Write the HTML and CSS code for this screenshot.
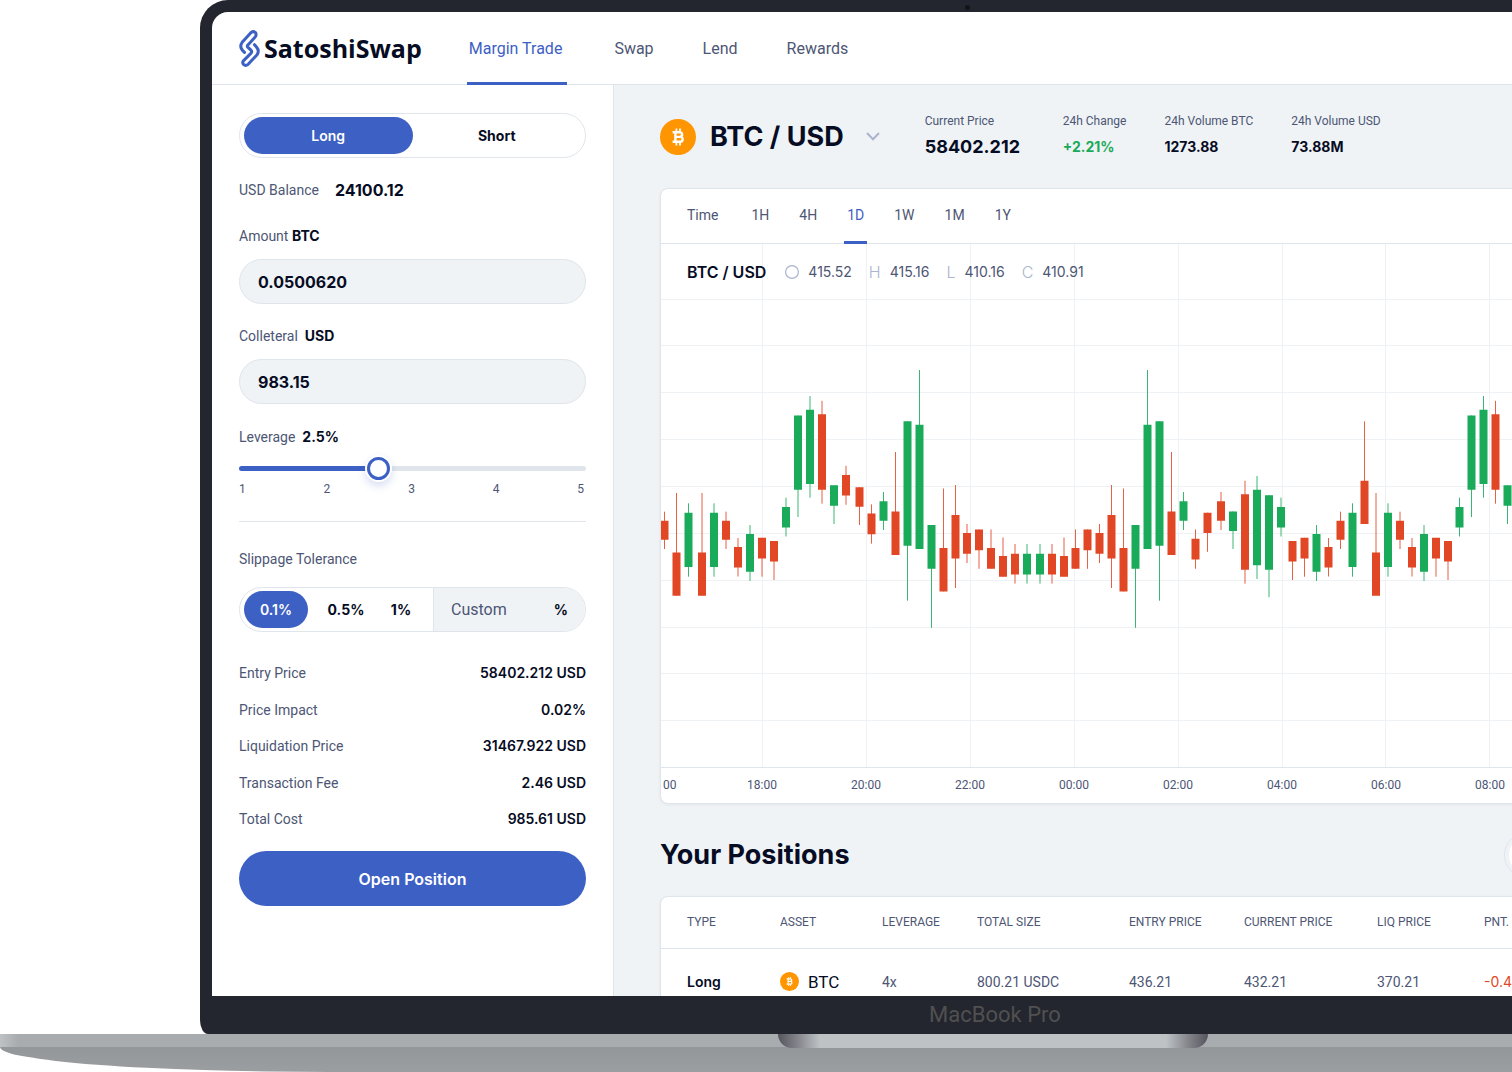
FILE: index.html
```html
<!DOCTYPE html>
<html lang="en">
<head>
<meta charset="utf-8">
<meta name="viewport" content="width=device-width, initial-scale=1">
<title>SatoshiSwap – Margin Trade</title>
<link rel="stylesheet" href="styles.css">
</head>
<body>
<svg class="defs" aria-hidden="true">
  <symbol id="btc" viewBox="0 0 36 36">
    <circle cx="18" cy="18" r="18" fill="#ff9500"/>
    <g fill="none" stroke="#fff" stroke-width="2.4">
      <path d="M12.6 13.2h7.2a2.3 2.3 0 0 1 0 4.7h-3.6M12.6 22.8h7.6a2.45 2.45 0 0 0 0-4.9h-4M15.4 13.2v9.6"/>
      <path stroke-width="1.8" d="M16.4 9.6v3M20 9.6v3M16.4 23.6v3M20 23.6v3"/>
    </g>
  </symbol>
</svg>
<div class="page">
  <div class="lid">
    <div class="lid-top"><span class="camera"></span></div>
    <div class="screen">
      <header class="topbar">
        <a class="logo" href="#">
          <svg width="21" height="37" viewBox="147 90 62 111" aria-hidden="true"><path fill="none" stroke="#3d60c4" stroke-width="9" stroke-linecap="round" stroke-linejoin="round" d="M163 157L157 151Q147 139 156 127L182 98Q190 92 196 98Q200 104 195 111L174 134Q169 139 174 143L182 150Q187 155 182 160L161 181Q155 187 160 193Q166 199 174 193L200 165Q209 153 199 141L193 134"/></svg>
          <span>SatoshiSwap</span>
        </a>
        <nav class="nav">
          <a class="active" href="#">Margin Trade</a>
          <a href="#">Swap</a>
          <a href="#">Lend</a>
          <a href="#">Rewards</a>
        </nav>
      </header>
      <div class="body">
        <aside class="panel">
          <div class="segmented">
            <button class="selected" type="button">Long</button>
            <button type="button">Short</button>
          </div>
          <p class="balance">USD Balance <strong>24100.12</strong></p>
          <div class="field">
            <label for="amount">Amount <b>BTC</b></label>
            <input id="amount" type="text" value="0.0500620">
          </div>
          <div class="field">
            <label for="collateral">Colleteral&nbsp; <b>USD</b></label>
            <input id="collateral" type="text" value="983.15">
          </div>
          <div class="leverage">
            <label for="leverage">Leverage&nbsp; <b>2.5%</b></label>
            <input id="leverage" type="range" min="1" max="5" step="0.01" value="2.58">
            <div class="ticks"><span>1</span><span>2</span><span>3</span><span>4</span><span>5</span></div>
          </div>
          <div class="slippage">
            <label for="custom">Slippage Tolerance</label>
            <div class="segmented options">
              <button class="selected" type="button">0.1%</button>
              <button type="button">0.5%</button>
              <button type="button">1%</button>
              <div class="custom"><input id="custom" type="text" placeholder="Custom"><b>%</b></div>
            </div>
          </div>
          <dl class="summary">
            <div><dt>Entry Price</dt><dd>58402.212 USD</dd></div>
            <div><dt>Price Impact</dt><dd>0.02%</dd></div>
            <div><dt>Liquidation Price</dt><dd>31467.922 USD</dd></div>
            <div><dt>Transaction Fee</dt><dd>2.46 USD</dd></div>
            <div><dt>Total Cost</dt><dd>985.61 USD</dd></div>
          </dl>
          <button class="submit" type="button">Open Position</button>
        </aside>
        <main class="main">
          <div class="market">
            <button class="pair" type="button">
              <svg width="36" height="36" aria-hidden="true"><use href="#btc"/></svg>
              <span>BTC / USD</span>
              <svg width="14" height="9" viewBox="0 0 14 9" aria-hidden="true"><path d="M1 1l6 6.2L13 1" fill="none" stroke="#abb4cd" stroke-width="2"/></svg>
            </button>
            <dl class="stats">
              <div><dt>Current Price</dt><dd class="price">58402.212</dd></div>
              <div><dt>24h Change</dt><dd class="up">+2.21%</dd></div>
              <div><dt>24h Volume BTC</dt><dd>1273.88</dd></div>
              <div><dt>24h Volume USD</dt><dd>73.88M</dd></div>
            </dl>
          </div>
          <section class="card">
            <div class="ranges">
              <span>Time</span>
              <button type="button">1H</button>
              <button type="button">4H</button>
              <button class="active" type="button">1D</button>
              <button type="button">1W</button>
              <button type="button">1M</button>
              <button type="button">1Y</button>
            </div>
            <div class="chart">
              <svg id="candles" width="1066" height="523" aria-label="BTC / USD price"></svg>
              <div class="ohlc">
                <strong>BTC / USD</strong>
                <span><svg width="14" height="20" viewBox="0 0 14 20" role="img" aria-label="O"><circle cx="7" cy="10" r="6.4" fill="none" stroke="#abb4cd" stroke-width="1.2"/></svg>415.52</span>
                <span><i>H</i>415.16</span>
                <span><i>L</i>410.16</span>
                <span><i>C</i>410.91</span>
              </div>
            </div>
            <div class="axis"><span>00</span><span>18:00</span><span>20:00</span><span>22:00</span><span>00:00</span><span>02:00</span><span>04:00</span><span>06:00</span><span>08:00</span></div>
          </section>
          <div class="heading">
            <h2>Your Positions</h2>
            <div class="segmented"><button class="light" type="button" aria-label="Open"></button><button type="button" aria-label="Closed"></button></div>
          </div>
          <section class="card">
            <table class="positions">
              <colgroup><col class="c-type"><col class="c-asset"><col class="c-lev"><col class="c-size"><col class="c-entry"><col class="c-current"><col class="c-liq"><col></colgroup>
              <thead><tr><th>TYPE</th><th>ASSET</th><th>LEVERAGE</th><th>TOTAL SIZE</th><th>ENTRY PRICE</th><th>CURRENT PRICE</th><th>LIQ PRICE</th><th>PNT.</th></tr></thead>
              <tbody><tr><td><b>Long</b></td><td><span class="asset"><svg width="19" height="19" aria-hidden="true"><use href="#btc"/></svg>BTC</span></td><td>4x</td><td>800.21 USDC</td><td>436.21</td><td>432.21</td><td>370.21</td><td class="down">-0.4</td></tr></tbody>
            </table>
          </section>
        </main>
      </div>
    </div>
    <div class="chin">MacBook Pro</div>
  </div>
  <div class="base">
    <div class="deck"><span class="notch"></span></div>
    <div class="underside"></div>
  </div>
</div>
<script src="chart.js"></script>
</body>
</html>
```
FILE: chart.js
```js
// Candle shapes: direction, high, body top, body bottom, low (chart pixels from y = 244).
const shapes = {
  a: ['r', 511.7, 520.7, 539.7, 549],
  b: ['r', 493, 552.5, 595.7, 595.7],
  c: ['g', 503.3, 512.7, 567, 576.7],
  d: ['r', 538, 547, 567.5, 576.5],
  e: ['g', 525, 534, 571.7, 581],
  f: ['r', 537.8, 537.8, 558.4, 576.7],
  g: ['r', 541, 541, 561.6, 580],
  h: ['g', 497.7, 507, 527.4, 536.5],
  i: ['g', 415.5, 415.5, 489.7, 517],
  j: ['g', 396, 409.8, 484, 497.7],
  k: ['r', 400.8, 414.3, 489.7, 503.7],
  l: ['g', 485.3, 485.3, 505.7, 524],
  m: ['r', 465.8, 475, 495.5, 504.8],
  n: ['r', 487.3, 487.3, 506.8, 525],
  o: ['r', 504.4, 513.6, 534.2, 543.6],
  p: ['g', 492, 501.2, 520.8, 530],
  q: ['r', 452, 511.4, 555, 555],
  s: ['g', 421.3, 421.3, 545.8, 600.7],
  t: ['g', 370, 424.7, 549, 549],
  u: ['g', 525, 525, 568.8, 627.8],
  v: ['r', 488.5, 548, 591.4, 591.4],
  w: ['r', 485, 515, 558.5, 588],
  x: ['r', 524, 533, 553.7, 563],
  y: ['r', 529.4, 529.4, 550.2, 568.8],
  z: ['r', 529.4, 548, 568.8, 568.8],
  A: ['r', 537.5, 556, 576.7, 576.7],
  B: ['r', 544, 553.8, 574.4, 583.6],
  C: ['g', 544, 553.8, 574.4, 583.6],
  D: ['r', 529.4, 538.8, 559.4, 568.8],
  E: ['r', 512.7, 512.7, 533, 551.8],
  F: ['r', 492, 501.2, 520.8, 530],
  G: ['g', 511.4, 511.4, 531, 549],
  H: ['r', 480.7, 494.3, 569.8, 583.7],
  I: ['g', 476, 489.7, 565.3, 579],
  J: ['g', 495.2, 495.2, 569.8, 597.2],
  K: ['r', 421.3, 480.7, 524, 524]
};
const series = 'abcbcadefghijklmnopqstuvwxyzABCCBAzyxwvutsqpDEFGHIJhgfedacKbcadefghijklmnop';
const centres = [664.5, 676.5, 688.5, 702, 714, 726, 738, 750, 762, 774, 786, 798, 810, 822, 834, 846, 859.5, 871.5, 883.5, 895.5, 907.5, 919.5, 931.5, 943.5, 955.5, 967, 979, 991, 1003, 1015, 1027, 1040, 1052, 1064, 1075.5, 1087.5, 1099.5, 1111.5, 1123.5, 1135.5, 1147.5, 1159.5, 1171.5, 1183.5, 1195.5, 1207.5, 1221, 1233, 1245, 1257, 1269, 1281, 1292.5, 1304.5, 1316.5, 1328.5, 1340.5, 1352.5, 1364.5, 1376, 1388, 1400, 1412, 1424, 1436, 1448, 1459.5, 1471.5, 1483.5, 1495.5, 1507.5, 1519.5, 1533, 1545, 1557];
const ox = 661, oy = 244;
const d = { grid: '', rb: '', rw: '', gb: '', gw: '' };
for (let i = 0; i < 10; i++) d.grid += `M${Math.round(102 + i * 103.9) - 0.5} 0V523`;
for (let i = 0; i < 10; i++) d.grid += `M0 ${Math.round(54.6 + i * 46.85) + 0.5}H1066`;
[...series].forEach((key, i) => {
  const [dir, high, top, bottom, low] = shapes[key];
  const x = centres[i] - ox;
  d[dir + 'w'] += `M${x} ${high - oy}V${low - oy}`;
  d[dir + 'b'] += `M${x} ${top - oy}V${bottom - oy}`;
});
document.getElementById('candles').innerHTML =
  `<path class="grid" d="${d.grid}"/>` +
  `<path class="wick red" d="${d.rw}"/><path class="wick green" d="${d.gw}"/>` +
  `<path class="bar red" d="${d.rb}"/><path class="bar green" d="${d.gb}"/>`;
```
FILE: styles.css
```css
:root {
  --blue: #3d60c4;
  --ink: #060c23;
  --muted: #4d5674;
  --line: #dfe5eb;
  --wash: #eff3f6;
  --red: #e14725;
  --green: #19aa5a;
  --strong: Inter, "Liberation Sans", sans-serif;
}

* { box-sizing: border-box; }

body {
  margin: 0;
  background: #fff;
  color: var(--muted);
  font: 14px/20px Roboto, "Liberation Sans", sans-serif;
}

button, input {
  margin: 0;
  padding: 0;
  border: 0;
  background: none;
  color: inherit;
  font: inherit;
}

button { cursor: pointer; }
a { color: inherit; text-decoration: none; }
p, h2, dl, dd { margin: 0; }
b, strong { color: var(--ink); font-family: var(--strong); font-weight: 700; }
svg { display: block; flex: none; }
.defs { display: none; }

/* Laptop frame: the right side bleeds out of the window */
.page {
  display: flex;
  flex-direction: column;
  height: 100vh;
  overflow: hidden;
}

.lid {
  display: flex;
  flex: 1;
  flex-direction: column;
  min-height: 0;
  margin: 0 -274px 0 200px;
  padding: 0 12px;
  border-radius: 28px 28px 8px 8px / 28px 28px 14px 14px;
  background: #23262e;
}

.lid-top {
  display: flex;
  align-items: center;
  justify-content: center;
  height: 12px;
  padding: 2px 52px 0 0;
}

.camera { width: 5px; height: 5px; border-radius: 50%; background: #121317; }

.screen {
  display: flex;
  flex: 1;
  flex-direction: column;
  min-height: 0;
  overflow: hidden;
  border-radius: 16px 16px 0 0;
  background: #fff;
}

.chin {
  height: 38px;
  padding-left: 4px;
  color: #505050;
  font: 400 22px/37px Roboto, sans-serif;
  text-align: center;
}

.base { flex: none; margin-right: -474px; }

.deck {
  display: flex;
  justify-content: center;
  height: 13px;
  background: linear-gradient(90deg, #bec2c5, #a8acae 18px);
}

.notch {
  z-index: 1;
  width: 430px;
  height: 14px;
  border-radius: 0 0 14px 14px;
  background: linear-gradient(90deg, #56555f, #85868c 20px, #bec2c5 42px, #bec2c5 388px, #85868c 410px, #56555f);
}

.underside {
  height: 25px;
  border-radius: 0 0 330px 330px / 0 0 25px 25px;
  background: linear-gradient(#949799, #9b9ea0);
}

/* Top bar */
.topbar {
  display: flex;
  flex: none;
  height: 73px;
  padding-left: 27px;
  border-bottom: 1px solid var(--line);
}

.logo {
  display: flex;
  align-items: center;
  gap: 4px;
  margin-right: 45px;
  color: var(--ink);
  font: 700 25px/32px "Open Sans", sans-serif;
}

.nav { display: flex; gap: 45px; font-size: 16px; line-height: 74px; }
.nav a { height: 73px; padding: 0 2px; }
.nav .active { padding-right: 5px; border-bottom: 3px solid var(--blue); color: var(--blue); }

.body { display: flex; flex: 1; min-height: 0; }

/* Order panel */
.panel {
  flex: none;
  width: 402px;
  padding: 28px 27px 0;
  border-right: 1px solid var(--line);
}

.segmented {
  display: flex;
  height: 45px;
  padding: 3px 4px;
  border: 1px solid var(--line);
  border-radius: 23px;
}

.segmented button {
  flex: 1;
  border-radius: 19px;
  color: var(--ink);
  font: 700 14px/20px var(--strong);
}

.segmented .selected { background: var(--blue); color: #fff; font-weight: 600; }

.balance { display: flex; gap: 16px; margin-top: 22px; }
.balance strong { font-size: 16px; }

.field, .leverage { display: flex; flex-direction: column; margin-top: 22px; }
.balance + .field { margin-top: 26px; }
.field { gap: 13px; }

.field input {
  width: 100%;
  height: 45px;
  padding: 0 18px;
  border: 1px solid var(--line);
  border-radius: 23px;
  background: var(--wash);
  color: var(--ink);
  font: 700 16px/20px var(--strong);
}

.leverage {
  margin-top: 23px;
  padding-bottom: 24px;
  border-bottom: 1px solid var(--line);
}

.leverage input {
  width: 100%;
  height: 25px;
  margin-top: 9px;
  appearance: none;
}

.leverage input::-webkit-slider-runnable-track {
  height: 5px;
  border-radius: 3px;
  background: linear-gradient(90deg, var(--blue) 40%, #e0e5eb 40%);
}

.leverage input::-webkit-slider-thumb {
  width: 23px;
  height: 23px;
  margin-top: -9px;
  border: 3px solid var(--blue);
  border-radius: 50%;
  background: #fff;
  box-shadow: 0 0 0 2px #fff, 0 4px 8px 2px rgba(61, 96, 196, .2);
  appearance: none;
}

.ticks {
  display: flex;
  justify-content: space-between;
  padding-right: 2px;
  font-size: 12px;
  line-height: 16px;
}

.slippage { padding-top: 27px; }
.slippage > label { display: block; }
.options { margin-top: 18px; padding: 0; overflow: hidden; }
.options button { flex: none; width: 34px; }
.options .selected { width: 64px; margin: 3px 0 3px 4px; }
.options .selected + button { width: 76px; }

.custom {
  display: flex;
  flex: 1;
  align-items: center;
  justify-content: space-between;
  margin-left: 15px;
  padding: 0 17px;
  border-left: 1px solid var(--line);
  background: var(--wash);
}

.custom input { width: 80px; font-size: 16px; }
.custom input::placeholder { color: var(--muted); opacity: 1; }

.summary {
  display: flex;
  flex-direction: column;
  justify-content: space-between;
  height: 166px;
  margin-top: 31px;
}

.summary div { display: flex; justify-content: space-between; }
.summary dd { color: var(--ink); font-family: var(--strong); font-weight: 600; }

.submit {
  width: 100%;
  height: 55px;
  margin-top: 22px;
  border-radius: 28px;
  background: var(--blue);
  color: #fff;
  font: 600 16px/20px var(--strong);
}

/* Market */
.main {
  flex: 1;
  min-width: 0;
  padding: 28px 46px 0;
  background: var(--wash);
}

.market { display: flex; gap: 45px; height: 47px; }

.pair {
  display: flex;
  align-items: center;
  color: var(--ink);
  font: 700 27px/36px var(--strong);
}

.pair span { margin: 0 22px 0 14px; }

.stats { display: flex; gap: 38px; }
.stats div:first-child { min-width: 100px; }
.stats dt { font-size: 12px; line-height: 16px; }
.stats dd { margin-top: 8px; color: var(--ink); font-family: var(--strong); font-weight: 700; }
.stats .price { font-size: 18px; }
.stats .up { color: var(--green); }

.card {
  overflow: hidden;
  border: 1px solid var(--line);
  border-radius: 8px;
  background: #fff;
  box-shadow: 0 1px 3px rgba(30, 50, 90, .06);
}

.market + .card { margin-top: 28px; }

.ranges {
  display: flex;
  gap: 24px;
  height: 55px;
  padding-left: 26px;
  border-bottom: 1px solid var(--line);
  line-height: 53px;
}

.ranges span { margin-right: 6px; }
.ranges button { height: 55px; padding: 0 3px; border-bottom: 3px solid transparent; }
.ranges .active { border-color: var(--blue); color: var(--blue); }

.chart { display: grid; overflow: hidden; }
.chart > * { grid-area: 1 / 1; }
.grid { stroke: #eff2f5; }
.wick { stroke-width: 1; opacity: .85; }
.bar { stroke-width: 8; }
.red { stroke: var(--red); }
.green { stroke: var(--green); }

.ohlc {
  display: flex;
  gap: 17px;
  align-self: start;
  padding: 18px 26px;
  font: 14px/20px var(--strong);
}

.ohlc strong { margin-right: 2px; font-size: 16px; font-weight: 600; }
.ohlc span { display: flex; gap: 9px; }
.ohlc i { color: #abb4cd; font-size: 16px; font-style: normal; font-weight: 300; }

.axis {
  display: flex;
  border-top: 1px solid var(--line);
  font-size: 12px;
  line-height: 35px;
}

.axis span { width: 104px; text-align: center; }
.axis span:first-child { width: 49px; padding-left: 2px; text-align: left; }

/* Positions */
.heading {
  display: flex;
  align-items: center;
  justify-content: space-between;
  margin: 28px 0 18px;
}

.heading h2 { color: var(--ink); font: 700 27px/36px var(--strong); }
.heading .segmented { width: 224px; height: 46px; }
.heading .light { background: #fff; }

.positions { width: 100%; border-collapse: collapse; table-layout: fixed; }
.positions th { height: 51px; padding: 0; border-bottom: 1px solid var(--line); font-size: 12px; font-weight: 400; text-align: left; }
.positions td { height: 67px; padding: 0; }
.positions th:first-child, .positions td:first-child { padding-left: 26px; }
.positions b { font-weight: 600; }
.c-type { width: 119px; }
.c-asset { width: 102px; }
.c-lev { width: 95px; }
.c-size { width: 152px; }
.c-entry { width: 115px; }
.c-current { width: 133px; }
.c-liq { width: 107px; }
.asset { display: flex; align-items: center; gap: 9px; color: var(--ink); font-size: 17px; }
.positions .down { color: var(--red); font-family: var(--strong); }
```
